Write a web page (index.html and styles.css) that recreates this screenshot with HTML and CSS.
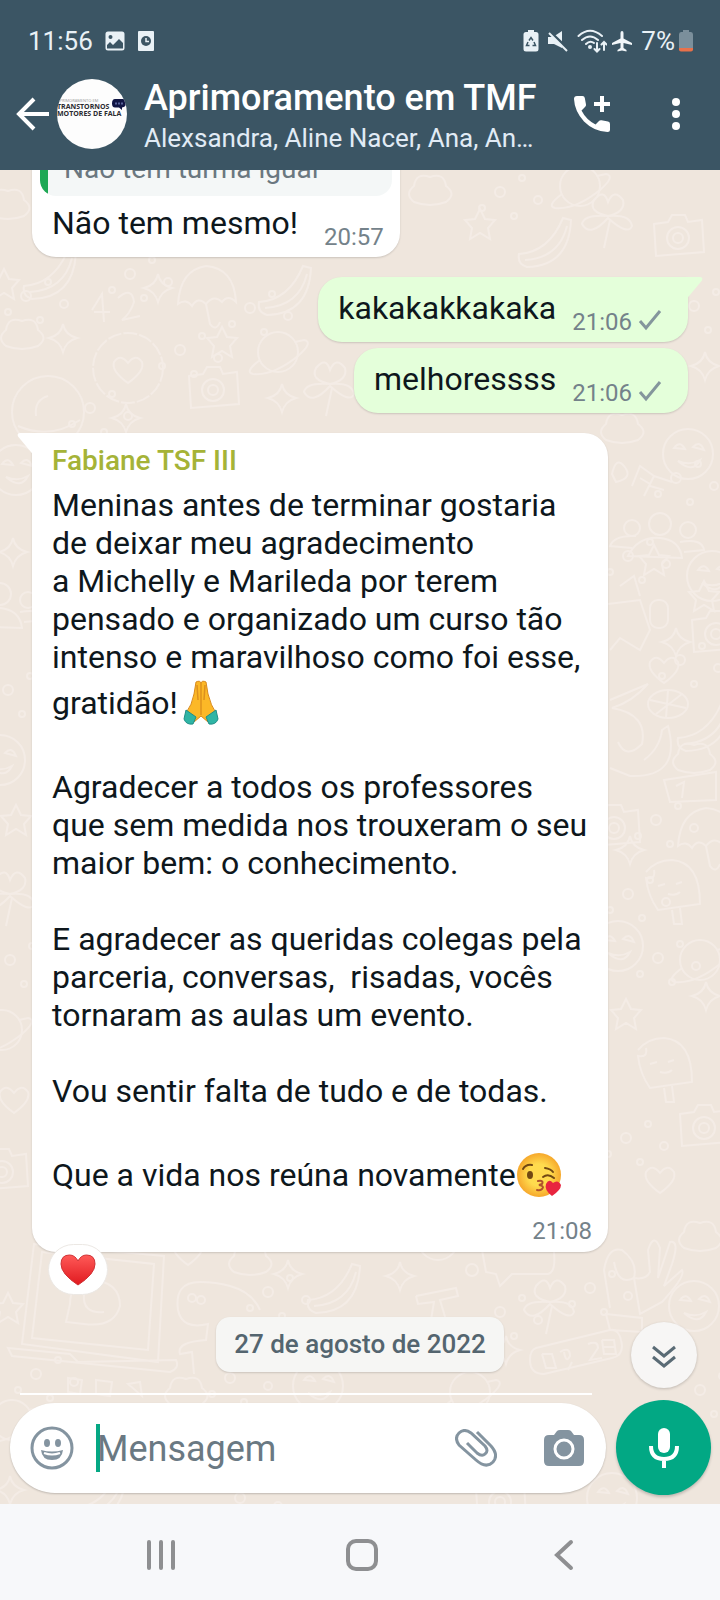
FILE: index.html
```html
<!DOCTYPE html>
<html lang="pt-BR">

<head>
	<meta charset="UTF-8">
	<meta name="viewport" content="width=device-width, initial-scale=1">
	<title>Aprimoramento em TMF</title>
	<link rel="stylesheet" href="styles.css">
</head>

<body>
	<header class="top">
		<!-- Phone status bar -->
		<div class="status">
			<span class="clock">11:56</span>
			<svg class="status-icon gap-left" width="20" height="20" viewBox="0 0 20 20">
				<path fill="#e9f1f6" fill-rule="evenodd" d="M3 0.500H17A2.500 2.500 0 0 1 19.500 3V17A2.500 2.500 0 0 1 17 19.500H3A2.500 2.500 0 0 1 .5 17V3A2.500 2.500 0 0 1 3 .5ZM2 14V17.500H18V12L14 8L8 14L5 11Z" />
				<circle cx="5.500" cy="6" r="2" fill="#3b5564" />
			</svg>
			<svg class="status-icon gap-left" width="18" height="22" viewBox="0 0 18 22">
				<rect x="1" y="1" width="16" height="20" rx="1" fill="#e9f1f6" />
				<circle cx="9" cy="11" r="5" fill="#3b5564" />
				<path d="M9 8V11.500H12" fill="none" stroke="#e9f1f6" stroke-width="1.500" />
			</svg>
			<span class="spacer"></span>
			<svg class="status-icon" width="16" height="22" viewBox="0 0 16 22">
				<path fill="#e9f1f6" d="M5 0H11V2H13Q15.500 2 15.500 4.500V19Q15.500 21.500 13 21.500H3Q.5 21.500 .5 19V4.500Q.5 2 3 2H5Z" />
				<path d="M6 10.500L8 7.500L10 10.500M11 12L12.500 15.500H9.500M6.500 15.500H3.500L5 12" fill="none" stroke="#3b5564" stroke-width="1.500" />
			</svg>
			<svg class="status-icon gap-mid" width="22" height="22" viewBox="0 0 22 22">
				<path fill="#e9f1f6" d="M1 7H6L15 1V18L7 14H1Z" />
				<path d="M1 0L22 20" stroke="#3b5564" stroke-width="3" />
				<path d="M2 3L20 21" stroke="#e9f1f6" stroke-width="2" />
			</svg>
			<svg class="status-icon gap-mid" width="30" height="24" viewBox="0 0 30 24">
				<g fill="none" stroke="#e9f1f6" stroke-width="2" stroke-linecap="round">
					<path d="M1.500 7Q13 -3.500 25 7M5 11Q13 4 21 11M9 15Q13 11 17 14" />
					<path d="M20 14V22M17.500 20L20 22.500L22.500 20M27 21V13M24.500 15.500L27 13L29.500 15.500" />
				</g>
				<circle cx="13" cy="18" r="2" fill="#e9f1f6" />
			</svg>
			<svg class="status-icon gap-small" width="22" height="22" viewBox="0 0 22 22">
				<path fill="#f1f6f9" d="M11 1Q12.500 1 12.500 3V8.500L21 13V15L12.500 13V18L15.500 20V21.500L11 20.500L6.500 21.500V20L9.500 18V13L1 15V13L9.500 8.500V3Q9.500 1 11 1Z" />
			</svg>
			<span class="battery-text">7%</span>
			<svg class="status-icon" width="16" height="22" viewBox="0 0 16 22">
				<path fill="#7b8f9b" d="M5 0H11V2H13Q15 2 15 4.500V18H1V4.500Q1 2 3 2H5Z" />
				<path fill="#e8714a" d="M1 18H15V19.500Q15 21.500 13 21.500H3Q1 21.500 1 19.500Z" />
			</svg>
		</div>

		<!-- Chat header -->
		<div class="chat-bar">
			<button class="icon-btn" aria-label="Voltar">
				<svg width="34" height="34" viewBox="0 0 34 34" fill="none" stroke="#fff" stroke-width="4">
					<path d="M33 17H4M18 2L3 17L18 32" />
				</svg>
			</button>
			<div class="avatar">
				<span class="avatar-small">APRIMORAMENTO EM</span>
				<span class="avatar-text">TRANSTORNOS</span>
				<span class="avatar-text">MOTORES DE FALA</span>
				<svg class="avatar-badge" width="14" height="11" viewBox="0 0 14 11">
					<path fill="#101544" d="M3 0H11Q14 0 14 4Q14 8 10 8.500L10 11L7 8.500H3Q0 8.500 0 4.500Q0 0 3 0Z" />
					<path d="M3 4.500H11" stroke="#59639a" stroke-width="2" stroke-dasharray="2 1" />
				</svg>
			</div>
			<div class="group">
				<h1 class="group-name">Aprimoramento em TMF</h1>
				<p class="group-members">Alexsandra, Aline Nacer, Ana, An…</p>
			</div>
			<button class="icon-btn call" aria-label="Ligar">
				<svg width="38" height="38" viewBox="0 0 38 38">
					<path fill="#fff" d="M4 1H9.500Q11.500 1 11.800 3L13 9.500Q13.200 11 12 12L8.500 15.500Q13 24.500 22.500 29.500L26 26Q27 25 28.500 25.300L35 26.500Q37 26.800 37 29V34.500Q37 37 34.500 37Q21 36.500 11 26.500Q1.500 16 1 4Q1 1 4 1Z" />
					<path d="M29 1V17M21 9H37" stroke="#fff" stroke-width="4" />
				</svg>
			</button>
			<button class="icon-btn" aria-label="Mais opções">
				<svg width="10" height="34" viewBox="0 0 10 34" fill="#fff">
					<circle cx="5" cy="5" r="4" />
					<circle cx="5" cy="17" r="4" />
					<circle cx="5" cy="29" r="4" />
				</svg>
			</button>
		</div>
	</header>

	<main class="chat">
		<!-- Wallpaper doodles -->
		<svg class="wallpaper" viewBox="0 0 720 1334" preserveAspectRatio="xMidYMid slice" aria-hidden="true">
			<defs>
				<path id="spark" d="M0-14Q2-3 14 0Q3 3 0 14Q-3 3-14 0Q-2-3 0-14Z" />
				<path id="star" d="M0-15L5-5L15-4L8 4L10 15L0 9L-10 15L-8 4L-15-4L-5-5Z" />
				<path id="heart" d="M0 13Q-17 1-14-8Q-8-17 0-7Q8-17 14-8Q17 1 0 13Z" />
				<path id="cloud" d="M-16 12Q-26 4-16-4Q-14-18 0-13Q14-18 16-4Q27 4 16 12Q0 18-16 12Z" />
				<g id="dots">
					<circle cx="0" cy="0" r="5" />
					<circle cx="22" cy="-14" r="3" />
					<circle cx="38" cy="8" r="4" />
					<circle cx="-18" cy="16" r="3" />
					<circle cx="14" cy="24" r="3" />
				</g>
				<g id="planet">
					<circle r="20" />
					<path d="M-18 8Q-34 20-25 22Q-5 24 20 4Q36-10 26-12L17-10" />
				</g>
				<g id="camera">
					<path d="M-24-12L-10-14L-6-21H7L10-14L24-16L26 16L-22 20Z" />
					<circle r="11" cy="2" />
					<circle r="5" cy="2" />
				</g>
				<g id="smile">
					<circle r="25" />
					<path d="M-14-6Q-8-14-3-5ZM5-7Q12-14 16-4ZM-10 7Q2 12 12 6Q5 20-10 7Z" />
				</g>
				<g id="flower">
					<path d="M0 0Q-20-4-14-16Q-4-28 0-14Q6-28 15-16Q18-4 0 0Q22-2 24 10Q20 20 0 2Q-18 22-26 8Q-24-2 0 0ZM2 4L-4 32" />
				</g>
				<g id="people">
					<circle cx="0" cy="-16" r="11" />
					<circle cx="-28" cy="-12" r="8" />
					<circle cx="28" cy="-10" r="8" />
					<path d="M-32 16Q-22-4 0-2Q20 0 22 18ZM-28 8L-50 6Q-46-5-24-4M20 2Q42-2 44 10L24 12" />
				</g>
				<g id="banana">
					<path d="M-26 14Q4 12 18-22L26-20Q24 26-18 27Q-28 24-26 14ZM-20 20Q14 18 22-14" />
				</g>
				<g id="icecream">
					<path d="M-26-20Q-16-32 0-32Q28-30 28 12L-14 18Q-24 4-26-14Q-16-12-18-22M8 16L10 32H2L0 18M-14-6L-7-8M4-8L10-10M-4 2Q4 4 8 0" />
				</g>
				<g id="umbrella">
					<path d="M-28 10Q-26-24 0-28Q28-26 30 8Q22 0 16 8Q8 0 0 10Q-8 2-14 12Q-20 4-28 10ZM0 10L4 30Q10 38 14 28" />
				</g>
			</defs>
			<g fill="none" stroke="#f4ece6" stroke-width="2">
				<use href="#cloud" x="8" y="34" />
				<use href="#dots" x="130" y="104" />
				<use href="#banana" x="50" y="102" />
				<use href="#star" x="4" y="114" />
				<use href="#spark" x="158" y="118" />
				<use href="#umbrella" x="206" y="124" />
				<use href="#planet" x="278" y="182" />
				<use href="#camera" x="213" y="218" />
				<use href="#spark" x="63" y="168" />
				<use href="#star" x="222" y="172" />
				<use href="#cloud" x="22" y="164" />
				<circle cx="128" cy="198" r="35" stroke-dasharray="14 2" />
				<use href="#heart" x="128" y="200" />
				<circle cx="48" cy="242" r="36" />
				<path d="M18 256Q50 270 80 250M36 246Q34 230 48 226M92 140L102 124L104 152M94 142H110M118 128Q132 116 134 132Q130 144 122 150L140 146" />
				<use href="#dots" x="180" y="180" />
				<use href="#dots" x="90" y="238" />
				<use href="#spark" x="282" y="228" />
				<use href="#banana" x="285" y="118" />
				<use href="#spark" x="126" y="248" />
				<use href="#flower" x="330" y="214" />
				<use href="#dots" x="250" y="138" />
				<use href="#dots" x="26" y="126" />
				<use href="#cloud" x="430" y="20" />
				<use href="#banana" x="545" y="70" />
				<use href="#star" x="480" y="54" />
				<use href="#flower" x="608" y="46" />
				<use href="#camera" x="678" y="66" />
				<use href="#dots" x="500" y="22" />
				<use href="#planet" x="580" y="16" />
				<use href="#smile" x="688" y="284" />
				<use href="#dots" x="694" y="136" />
				<use href="#spark" x="705" y="196" />
				<use href="#cloud" x="622" y="258" />
				<path d="M612 304Q616 286 624 296Q634 308 616 312ZM632 316L640 296L654 306M640 308L650 314M644 326L654 306L672 312M650 316L664 320" />
				<use href="#dots" x="676" y="308" />
				<use href="#people" x="660" y="370" />
				<use href="#star" x="654" y="390" />
				<use href="#dots" x="628" y="386" />
				<use href="#smile" x="712" y="406" />
				<path d="M608 434L640 430L650 460L640 480L620 468L610 480M620 416L634 406L640 426" />
				<rect x="650" y="430" width="18" height="28" rx="8" />
				<use href="#spark" x="676" y="472" />
				<use href="#star" x="704" y="426" />
				<use href="#camera" x="716" y="462" />
				<use href="#heart" x="664" y="500" />
				<use href="#dots" x="680" y="490" />
				<ellipse cx="668" cy="534" rx="20" ry="14" />
				<path d="M650 530L686 538M656 544L682 524M668 520L666 548" />
				<path d="M610 530L648 514Q632 532 612 538Q648 544 642 574Q626 590 618 572M644 590Q660 578 662 560L668 556Q682 608 630 606L610 598" />
				<use href="#banana" x="704" y="554" />
				<use href="#cloud" x="694" y="588" />
				<path d="M664 610L716 602V630L670 632ZM676 616L684 612L682 628" />
				<use href="#camera" x="614" y="656" />
				<use href="#dots" x="656" y="650" />
				<use href="#spark" x="630" y="680" />
				<use href="#umbrella" x="706" y="666" />
				<use href="#icecream" x="672" y="722" />
				<use href="#dots" x="628" y="724" />
				<use href="#smile" x="618" y="776" />
				<use href="#dots" x="658" y="788" />
				<use href="#planet" x="700" y="790" />
				<use href="#spark" x="706" y="826" />
				<use href="#star" x="626" y="844" />
				<use href="#icecream" x="664" y="900" />
				<use href="#camera" x="704" y="956" />
				<use href="#dots" x="626" y="968" />
				<use href="#heart" x="660" y="1010" />
				<use href="#spark" x="13" y="382" />
				<use href="#people" x="0" y="440" />
				<use href="#dots" x="8" y="520" />
				<use href="#smile" x="0" y="590" />
				<use href="#star" x="16" y="650" />
				<use href="#flower" x="10" y="724" />
				<use href="#dots" x="10" y="790" />
				<use href="#planet" x="2" y="860" />
				<use href="#heart" x="14" y="930" />
				<use href="#camera" x="2" y="1000" />
				<use href="#smile" x="16" y="300" />
				<!-- laptop -->
				<path d="M34 1074L164 1086L158 1192L22 1174ZM42 1082L154 1094L148 1180L32 1168ZM8 1178L70 1184L78 1192L176 1190Q180 1198 170 1202L12 1186Z" />
				<path d="M66 1152L70 1134Q70 1112 92 1110Q120 1112 120 1136Q114 1158 84 1154ZM84 1124Q82 1144 104 1142" />
				<use href="#star" x="8" y="1138" />
				<path d="M178 1140Q174 1112 200 1112Q216 1112 230 1116Q252 1122 260 1140M178 1140Q182 1160 208 1154L206 1170Q176 1172 180 1184L192 1182L194 1204" />
				<circle cx="192" cy="1128" r="4" />
				<circle cx="201" cy="1130" r="4" />
				<use href="#dots" x="268" y="1122" />
				<use href="#spark" x="288" y="1104" />
				<use href="#heart" x="188" y="1082" />
				<use href="#cloud" x="250" y="1090" />
				<use href="#banana" x="334" y="1116" />
				<use href="#spark" x="400" y="1106" />
				<path d="M482 1080L486 1102L496 1104L500 1116L512 1104H548Q556 1102 554 1082" />
				<path d="M416 1126L456 1118L458 1126L440 1130L446 1150M416 1126L418 1134L434 1132L430 1156" />
				<use href="#flower" x="550" y="1132" />
				<circle cx="438" cy="1070" r="20" />
				<use href="#dots" x="590" y="1118" />
				<use href="#dots" x="500" y="1142" />
				<circle cx="472" cy="1100" r="6" />
				<path d="M610 1138L604 1100Q608 1076 622 1080Q638 1092 634 1108Q618 1116 614 1092M634 1108Q646 1110 650 1102L648 1080Q654 1062 660 1078L658 1108L670 1072Q680 1070 672 1094L664 1116L682 1100Q686 1106 662 1132L640 1144ZM606 1144L642 1148V1162L610 1160Z" />
				<use href="#smile" x="694" y="1136" />
				<use href="#cloud" x="700" y="1066" />
				<path d="M536 1178L610 1160Q620 1158 622 1176Q622 1186 612 1188L544 1204Q530 1204 530 1190Q530 1180 536 1178Z" />
				<path d="M542 1184H552L556 1198H546L542 1184M560 1182Q570 1176 570 1186Q566 1194 564 1182M572 1192L568 1200M588 1174Q598 1170 598 1178L590 1190L602 1188M602 1170H614L616 1184H604L602 1170M603 1177H615" />
				<use href="#dots" x="36" y="1204" />
				<path d="M68 1208L82 1210L80 1224L68 1222ZM96 1210L112 1212L110 1226L96 1224ZM128 1214L140 1212L142 1226Z" />
				<use href="#planet" x="12" y="1250" />
				<use href="#dots" x="230" y="1208" />
				<use href="#planet" x="470" y="1222" />
				<use href="#spark" x="506" y="1180" />
				<use href="#cloud" x="186" y="1222" />
				<use href="#smile" x="318" y="1216" />
				<use href="#banana" x="100" y="1324" />
				<use href="#dots" x="240" y="1328" />
				<use href="#camera" x="500" y="1330" />
				<use href="#smile" x="612" y="1328" />
				<use href="#dots" x="700" y="1220" />
				<use href="#spark" x="10" y="1320" />
			</g>
		</svg>

		<div class="messages">
			<div class="bubble short received">
				<div class="quote">Não tem turma igual</div>
				<div class="line">
					<span class="text">Não tem mesmo!</span>
					<time class="time">20:57</time>
				</div>
			</div>

			<div class="bubble short sent tail-right">
				<svg class="tail" width="15" height="22" viewBox="0 0 16 24" preserveAspectRatio="xMinYMin">
					<path fill="#e4ffda" d="M0 0H13Q17 0 15 4L0 22Z" />
				</svg>
				<div class="line">
					<span class="text">kakakakkakaka</span>
					<time class="time">21:06</time>
					<svg class="check" width="24" height="22" viewBox="0 0 24 22">
						<path d="M2 12L8 19L22 2" fill="none" stroke="#84969c" stroke-width="3" />
					</svg>
				</div>
			</div>

			<div class="bubble short sent">
				<div class="line">
					<span class="text">melhoressss</span>
					<time class="time">21:06</time>
					<svg class="check" width="24" height="22" viewBox="0 0 24 22">
						<path d="M2 12L8 19L22 2" fill="none" stroke="#84969c" stroke-width="3" />
					</svg>
				</div>
			</div>

			<div class="bubble long received tail-left">
				<svg class="tail" width="15" height="22" viewBox="0 0 16 24" preserveAspectRatio="xMaxYMin">
					<path fill="#fff" d="M16 0H3Q-1 0 1 4L16 22Z" />
				</svg>
				<h2 class="sender">Fabiane TSF III</h2>
				<p class="text">Meninas antes de terminar gostaria de deixar meu agradecimento a&nbsp;Michelly e Marileda por terem pensado e organizado um curso tão intenso e maravilhoso como foi esse, gratidão!<svg class="emoji" width="46" height="46" viewBox="0 0 46 46" role="img" aria-label="mãos juntas">
						<path fill="#fcb827" stroke="#d98a1c" d="M18 2Q22 0 23 3Q24 0 28 2L30 14Q33 26 38 33L30 42L23 36L16 42L8 33Q14 25 16 14Z" />
						<path d="M23 3V35M19 5L20 20M27 5L26 20" fill="none" stroke="#dd911e" stroke-width="1.500" />
						<path fill="#2fb5a5" stroke="#208f87" d="M8 30L18 37L15 44Q8 45 6 39ZM38 30L28 37L31 44Q38 45 40 39Z" />
					</svg></p>
				<p class="text">Agradecer a todos os professores que sem medida nos trouxeram o seu maior bem: o conhecimento.</p>
				<p class="text">E agradecer as queridas colegas pela parceria, conversas,&nbsp; risadas, vocês tornaram as aulas um evento.</p>
				<p class="text">Vou sentir falta de tudo e de todas.</p>
				<p class="text">Que a vida nos reúna novamente<svg class="emoji" width="46" height="46" viewBox="0 0 46 46" role="img" aria-label="rosto mandando beijo">
						<defs>
							<radialGradient id="face">
								<stop offset="0.500" stop-color="#ffdb4e" />
								<stop offset="1" stop-color="#f6a82c" />
							</radialGradient>
						</defs>
						<circle cx="23" cy="23" r="22" fill="url(#face)" />
						<path d="M7 17Q10 12 16 13M29 16Q35 17 37 20M27 25Q32 21 38 26" fill="none" stroke="#714813" stroke-width="2" stroke-linecap="round" />
						<ellipse cx="14" cy="23" rx="3" ry="4" fill="#714813" />
						<path d="M22 29Q28 28 26 32L23 33Q29 34 26 37Q24 39 21 38" fill="none" stroke="#b0522b" stroke-width="2" stroke-linecap="round" />
						<path fill="#e8243f" d="M36 44Q28 38 30 32Q33 26 37 31Q42 27 45 33Q45 38 36 44Z" />
					</svg></p>
				<time class="time">21:08</time>
				<button class="reaction" aria-label="Reação">
					<svg width="36" height="32" viewBox="0 0 36 32">
						<defs>
							<linearGradient id="red" x1="0" y1="0" x2="0" y2="1">
								<stop offset="0" stop-color="#ff5a58" />
								<stop offset="1" stop-color="#e0191f" />
							</linearGradient>
						</defs>
						<path fill="url(#red)" stroke="#cf3134" d="M18 31Q1 20 1 10Q1 1 9.500 1Q15 1 18 7Q21 1 26.500 1Q35 1 35 10Q35 20 18 31Z" />
					</svg>
				</button>
			</div>

			<div class="date">27 de agosto de 2022</div>
			<div class="next-bubble"></div>
		</div>

		<button class="scroll-down" aria-label="Ir para o final">
			<svg width="26" height="24" viewBox="0 0 26 24" fill="none" stroke="#5a6b75" stroke-width="3">
				<path d="M2 2L13 11L24 2M2 12L13 21L24 12" />
			</svg>
		</button>

		<!-- Message input -->
		<form class="composer">
			<div class="field">
				<button type="button" class="icon-btn" aria-label="Emoji">
					<svg width="44" height="44" viewBox="0 0 44 44">
						<circle cx="22" cy="22" r="20" fill="none" stroke="#8494a0" stroke-width="3" />
						<ellipse cx="17" cy="17" rx="3" ry="4" fill="#8494a0" />
						<ellipse cx="28" cy="17" rx="3" ry="4" fill="#8494a0" />
						<path d="M11 24Q22 27 33 24Q32 34 22 34Q12 34 11 24Z" fill="#8494a0" />
						<path d="M14 27Q22 30 30 27" fill="none" stroke="#fff" stroke-width="2" />
					</svg>
				</button>
				<span class="caret"></span>
				<input class="input" id="message" type="text" placeholder="Mensagem" aria-label="Mensagem">
				<button type="button" class="icon-btn clip" aria-label="Anexar">
					<svg width="42" height="38" viewBox="0 0 42 38" fill="none" stroke="#8494a0" stroke-width="3">
						<path d="M22 3L36 17Q44 26 38 33Q31 40 21 31L4 16Q-1 9 4 4Q9-1 16 4L30 17Q34 22 30 25Q27 28 22 24L12 14" />
					</svg>
				</button>
				<button type="button" class="icon-btn" aria-label="Câmera">
					<svg width="40" height="38" viewBox="0 0 40 38">
						<path fill="#8494a0" d="M13 2Q14 1 16 1H24Q26 1 27 2L30 6H35Q40 6 40 11V32Q40 37 35 37H5Q0 37 0 32V11Q0 6 5 6H10Z" />
						<circle cx="20" cy="20" r="9" fill="none" stroke="#fff" stroke-width="3" />
					</svg>
				</button>
			</div>
			<button type="button" class="mic" aria-label="Gravar áudio">
				<svg width="30" height="42" viewBox="0 0 30 42">
					<rect x="9" y="1" width="12" height="25" rx="6" fill="#fff" />
					<path d="M2 19Q2 32 15 32Q28 32 28 19M15 32V41" fill="none" stroke="#fff" stroke-width="4" />
				</svg>
			</button>
		</form>
	</main>

	<nav class="system-nav">
		<button class="icon-btn" aria-label="Recentes">
			<svg width="34" height="34" viewBox="0 0 34 34" stroke="#8e8f91" stroke-width="4" stroke-linecap="round">
				<path d="M5 4V30M17 4V30M29 4V30" />
			</svg>
		</button>
		<button class="icon-btn" aria-label="Início">
			<svg width="34" height="34" viewBox="0 0 34 34" fill="none" stroke="#8e8f91" stroke-width="4">
				<rect x="3" y="3" width="28" height="28" rx="8" />
			</svg>
		</button>
		<button class="icon-btn" aria-label="Voltar">
			<svg width="34" height="34" viewBox="0 0 34 34" fill="none" stroke="#8e8f91" stroke-width="4" stroke-linecap="round">
				<path d="M25 4L11 17L25 30" />
			</svg>
		</button>
	</nav>
</body>

</html>
```
FILE: styles.css
```css
* {
	box-sizing: border-box;
}

body {
	margin: 0;
	height: 100vh;
	display: flex;
	flex-direction: column;
	font-family: Roboto, sans-serif;
	color: #0e171c;
}

h1, h2, p {
	margin: 0;
}

svg {
	flex: none;
	display: block;
}

button {
	border: 0;
	padding: 0;
	background: none;
	display: flex;
	align-items: center;
	justify-content: center;
	flex: none;
}

/* Header */

.top {
	background-color: #3b5564;
	color: #fff;
	height: 170px;
	flex: none;
}

.status {
	display: flex;
	align-items: center;
	padding: 24px 26px 0 28px;
	height: 58px;
	font-size: 26px;
	color: #e9f1f6;
}

.spacer {
	flex: 1;
}

.gap-left {
	margin-left: 12px;
}

.gap-mid {
	margin-left: 8px;
}

.gap-small {
	margin-left: 4px;
}

.battery-text {
	margin: 0 3px 0 8px;
}

.chat-bar {
	display: flex;
	align-items: center;
	height: 112px;
	padding: 0 39px 0 16px;
}

.avatar {
	position: relative;
	width: 70px;
	height: 70px;
	margin-left: 7px;
	padding-top: 19px;
	border-radius: 50%;
	overflow: hidden;
	background-color: #fdfdfd;
	color: #2b2b30;
	font-family: "Open Sans", sans-serif;
	flex: none;
	white-space: nowrap;
}

.avatar span {
	display: block;
}

.avatar-small {
	font-size: 4px;
	line-height: 5px;
	color: #999;
}

.avatar-text {
	font-size: 7px;
	line-height: 7px;
	font-weight: 700;
}

.avatar-badge {
	position: absolute;
	top: 20px;
	right: 1px;
}

.group {
	flex: 1;
	min-width: 0;
	margin-left: 17px;
	padding-top: 6px;
}

.group-name {
	font-size: 36px;
	line-height: 42px;
	font-weight: 500;
	white-space: nowrap;
}

.group-members {
	font-size: 26px;
	line-height: 38px;
	color: #e1ebf5;
	white-space: nowrap;
	overflow: hidden;
	text-overflow: ellipsis;
}

.call {
	margin: 0 60px 0 33px;
}

/* Conversation */

.chat {
	position: relative;
	flex: 1;
	min-height: 0;
	display: flex;
	flex-direction: column;
	background-color: #efe6dd;
}

.wallpaper {
	position: absolute;
	top: 0;
	left: 0;
	width: 100%;
	height: 100%;
}

.messages {
	position: relative;
	flex: 1;
	min-height: 0;
	overflow: hidden;
	display: flex;
	flex-direction: column;
	justify-content: flex-end;
	padding: 0 32px;
}

.bubble {
	position: relative;
	flex: none;
	border-radius: 24px;
	box-shadow: 0 1px 2px rgba(0, 0, 0, 0.15);
}

.received {
	align-self: flex-start;
	background-color: #fff;
}

.sent {
	align-self: flex-end;
	background-color: #e4ffda;
}

.short {
	padding: 12px 16px 15px 20px;
	margin-bottom: 6px;
}

.short.received {
	padding-top: 8px;
	margin-bottom: 20px;
}

.sent .line {
	padding-right: 10px;
}

.tail-right {
	border-top-right-radius: 0;
}

.tail-left {
	border-top-left-radius: 0;
}

.tail {
	position: absolute;
	top: 0;
}

.tail-right .tail {
	left: 100%;
}

.tail-left .tail {
	right: 100%;
}

.quote {
	margin: 0 -8px 8px -12px;
	padding: 20px 24px 10px;
	border-radius: 16px;
	background: linear-gradient(to right, #1fa855 8px, #f4f7f7 8px);
	color: #6b7880;
	font-size: 28px;
	line-height: 34px;
}

.line {
	display: flex;
	align-items: flex-end;
}

.text {
	font-size: 32px;
	line-height: 38px;
}

.time {
	font-size: 24px;
	line-height: 24px;
	color: #74828a;
}

.line .time {
	margin-left: 26px;
	margin-bottom: -7px;
}

.sent .line .time {
	margin-left: 16px;
}

.check {
	margin-left: 6px;
	margin-bottom: -4px;
}

.long {
	max-width: 80vw;
	margin-top: 14px;
	padding: 12px 16px 9px 20px;
}

.long .text {
	margin-bottom: 38px;
}

.long .text:last-of-type {
	margin-bottom: 17px;
}

.long .time {
	display: block;
	text-align: right;
}

.sender {
	font-size: 28px;
	line-height: 32px;
	font-weight: 500;
	color: #a5b337;
	margin-bottom: 9px;
}

.emoji {
	display: inline-block;
	vertical-align: -16px;
	margin: 4px 0;
}

.reaction {
	position: absolute;
	left: 16px;
	bottom: -43px;
	width: 60px;
	height: 51px;
	border: 1px solid #ece8e4;
	border-radius: 26px;
	background-color: #fff;
}

.date {
	flex: none;
	align-self: center;
	margin: 65px 0 21px;
	padding: 12px 18px;
	border-radius: 14px;
	background-color: #f6f6f4;
	box-shadow: 0 1px 2px rgba(0, 0, 0, 0.15);
	color: #54656f;
	font-size: 26px;
	line-height: 31px;
	font-weight: 500;
}

.next-bubble {
	flex: none;
	height: 2px;
	margin: 0 96px 0 -12px;
	background-color: #fff;
}

.scroll-down {
	position: absolute;
	right: 23px;
	bottom: 116px;
	width: 66px;
	height: 66px;
	padding-top: 4px;
	border-radius: 50%;
	background-color: #f7f6f5;
	box-shadow: 0 1px 3px rgba(0, 0, 0, 0.2);
}

/* Composer */

.composer {
	position: relative;
	flex: none;
	display: flex;
	align-items: center;
	gap: 10px;
	padding: 5px 9px 9px 10px;
}

.field {
	flex: 1;
	min-width: 0;
	height: 90px;
	display: flex;
	align-items: center;
	padding: 0 22px 0 20px;
	border-radius: 45px;
	background-color: #fff;
	box-shadow: 0 1px 2px rgba(0, 0, 0, 0.2);
}

.caret {
	flex: none;
	width: 4px;
	height: 48px;
	margin: 0 -3px 0 22px;
	background-color: #05a884;
}

.input {
	flex: 1;
	min-width: 0;
	border: 0;
	padding: 2px 0 0;
	outline: none;
	background: none;
	font-family: inherit;
	font-size: 36px;
}

.input::placeholder {
	color: #6a7983;
	opacity: 1;
}

.clip {
	margin-right: 47px;
}

.mic {
	width: 95px;
	height: 95px;
	border-radius: 50%;
	background-color: #02a884;
	box-shadow: 0 2px 3px rgba(0, 0, 0, 0.2);
}

/* Android buttons */

.system-nav {
	flex: none;
	height: 96px;
	display: flex;
	align-items: center;
	justify-content: space-around;
	padding: 6px 56px 0 60px;
	background-color: #f7f8fa;
}
```
